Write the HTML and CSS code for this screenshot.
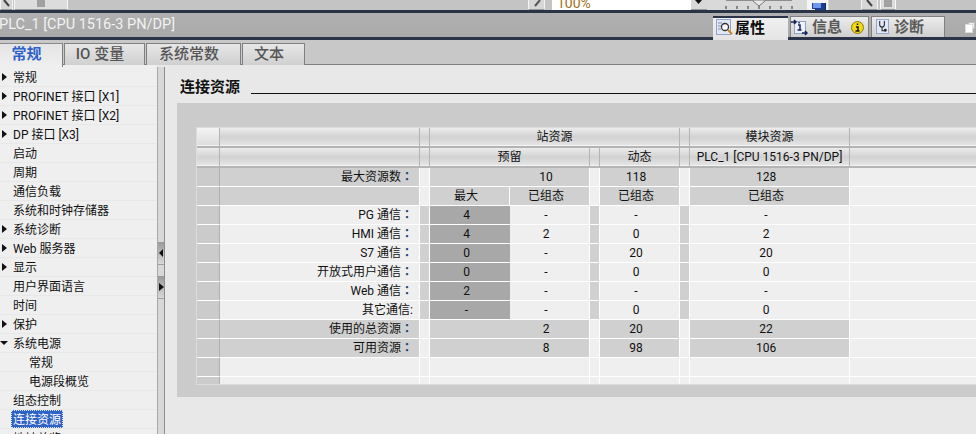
FILE: index.html
```html
<!DOCTYPE html>
<html lang="zh-CN">
<head>
<meta charset="utf-8">
<title>PLC_1 属性</title>
<link rel="stylesheet" href="styles.css">
</head>
<body>
<div class="app">
  <div class="toolbar">
    <span class="tool tool-a"><svg width="10" height="10" viewBox="0 0 10 10"><path d="M2 0l5 6" stroke="#444" stroke-width="2"/></svg></span>
    <span class="thumb thumb-a"><svg width="8" height="10" viewBox="0 0 8 10"><path d="M1 0v7M3 0v7M5 0v7M7 0v7" stroke="#666"/></svg></span>
    <span class="tool tool-b"><svg width="10" height="10" viewBox="0 0 10 10"><path d="M8 0L3 6" stroke="#555" stroke-width="2"/></svg></span>
    <span class="zoom-input">100%</span>
    <span class="zoom-drop"><svg width="8" height="5" viewBox="0 0 8 5"><path d="M0 0h7L3.500 4z" fill="#111"/></svg></span>
    <span class="slider">
      <svg width="82" height="10" viewBox="0 0 82 10"><path d="M1 0h66" stroke="#444"/><path d="M1 6v3M12 6v3M23 6v3M34 5v4M45 6v3M56 6v3M67 6v3" stroke="#333"/><path d="M28 0h12v1l-6 5-6-5z" fill="#e8e8e8" stroke="#777"/></svg>
      <span class="zoom-fit"><svg width="16" height="10" viewBox="0 0 16 10"><rect x="4.500" y="-2.500" width="10" height="11" fill="#1b3f8f" stroke="#12265a"/><rect x="1.500" y="-5.500" width="9" height="11" fill="#6f98ea" stroke="#1b3f8f"/></svg></span>
    </span>
    <span class="tool tool-c"><svg width="10" height="10" viewBox="0 0 10 10"><path d="M2 0l5 6" stroke="#444" stroke-width="2"/></svg></span>
    <span class="thumb thumb-b"><svg width="8" height="10" viewBox="0 0 8 10"><path d="M1 0v7M3 0v7M5 0v7M7 0v7" stroke="#666"/></svg></span>
  </div>

  <header class="titlebar">
    <span class="device">PLC_1 [CPU 1516-3 PN/DP]</span>
    <nav class="inspector-tabs">
      <span class="itab itab-active itab-props">
        <svg class="itab-icon" width="17" height="17" viewBox="0 0 17 17"><rect x=".5" y=".5" width="14" height="15" fill="#dfe6f5" stroke="#8fa3cc"/><path d="M2 4h4M2 7h3M2 10h3" stroke="#7f8fb0"/><circle cx="9" cy="8" r="3.500" fill="#fff" stroke="#333" stroke-width="1.300"/><path d="M12 11l4 4" stroke="#c9861a" stroke-width="2"/></svg>
        属性
      </span>
      <span class="itab itab-info">
        <svg class="itab-icon" width="17" height="17" viewBox="0 0 17 17"><rect x="3.500" y="2.500" width="11" height="12" fill="#eef1fa" stroke="#8fa3cc"/><path d="M0 3h4M3 1l2 2-2 2M11 14h5M14 12l2 2-2 2" fill="none" stroke="#13245a" stroke-width="1.500"/><path d="M8 3v1.500M7 6h2v5M6.500 11h4" fill="none" stroke="#13245a" stroke-width="1.500"/></svg>
        <span class="itab-label">信息</span>
        <svg class="info-badge" width="13" height="13" viewBox="0 0 13 13"><circle cx="6.500" cy="6.500" r="6" fill="#f4d90f" stroke="#8a7a10"/><path d="M6.500 2.500v1.500M5 6h2v3.500M4.500 10h4" fill="none" stroke="#111" stroke-width="1.500"/></svg>
      </span>
      <span class="itab itab-diag">
        <svg class="itab-icon" width="13" height="16" viewBox="0 0 14 17"><rect x=".5" y=".5" width="13" height="15" fill="#e2e8f6" stroke="#8fa3cc"/><path d="M4 2v4a2.500 2.500 0 0 0 5 0V2M6.500 9v3.500h3" fill="none" stroke="#222" stroke-width="1.100"/><circle cx="10" cy="12" r="1.500" fill="#222"/></svg>
        诊断
      </span>
    </nav>
    <span class="win-btn"><svg width="10" height="11" viewBox="0 0 10 11"><rect x="3.500" y=".5" width="6" height="6" fill="#eee" stroke="#bbb"/><rect x=".5" y="2.500" width="7" height="8" fill="#fff" stroke="#ddd"/></svg></span>
  </header>

  <div class="subtabs">
    <span class="subtab subtab-active w-general">常规</span>
    <span class="subtab w-io">IO 变量</span>
    <span class="subtab w-const">系统常数</span>
    <span class="subtab w-text">文本</span>
  </div>

  <main class="body-area">
    <aside class="tree">
      <div class="node arrow">常规</div>
      <div class="node arrow">PROFINET 接口 [X1]</div>
      <div class="node arrow">PROFINET 接口 [X2]</div>
      <div class="node arrow">DP 接口 [X3]</div>
      <div class="node">启动</div>
      <div class="node">周期</div>
      <div class="node">通信负载</div>
      <div class="node">系统和时钟存储器</div>
      <div class="node arrow">系统诊断</div>
      <div class="node arrow">Web 服务器</div>
      <div class="node arrow">显示</div>
      <div class="node">用户界面语言</div>
      <div class="node">时间</div>
      <div class="node arrow">保护</div>
      <div class="node open">系统电源</div>
      <div class="node child">常规</div>
      <div class="node child">电源段概览</div>
      <div class="node">组态控制</div>
      <div class="node"><span class="selected">连接资源</span></div>
      <div class="node">地址总览</div>
    </aside>
    <div class="splitter">
      <span class="grip grip-left"><svg width="5" height="8" viewBox="0 0 5 8"><path d="M4 0v8L0 4z" fill="#111"/></svg></span>
      <span class="grip grip-right"><svg width="5" height="8" viewBox="0 0 5 8"><path d="M0 0v8l5-4z" fill="#111"/></svg></span>
    </div>
    <section class="content">
      <h2 class="section-title"><span>连接资源</span></h2>
      <div class="panel">
        <table class="res">
          <colgroup>
            <col class="c-h"><col class="c-l"><col class="c-g"><col class="c-v"><col class="c-v"><col class="c-g"><col class="c-v"><col class="c-g"><col class="c-m"><col>
          </colgroup>
          <tr class="head">
            <th class="corner"></th><th></th><th></th><th colspan="4">站资源</th><th></th><th>模块资源</th><th class="end"></th>
          </tr>
          <tr class="head">
            <th></th><th></th><th></th><th colspan="2">预留</th><th></th><th>动态</th><th></th><th>PLC_1 [CPU 1516-3 PN/DP]</th><th class="end"></th>
          </tr>
          <tr class="sum">
            <td class="h"></td><td class="l">最大资源数<span class="colon" lang="zh-Hant">：</span></td><td class="g"></td><td class="v" colspan="2"><span class="at-right">10</span></td><td class="g"></td><td class="v">118</td><td class="g"></td><td class="v">128</td><td class="rest"></td>
          </tr>
          <tr class="sum">
            <td class="h"></td><td class="l"></td><td class="g"></td><td class="v">最大</td><td class="v">已组态</td><td class="g"></td><td class="v">已组态</td><td class="g"></td><td class="v">已组态</td><td class="rest"></td>
          </tr>
          <tr>
            <td class="h"></td><td class="l">PG 通信<span class="colon" lang="zh-Hant">：</span></td><td class="g"></td><td class="v dark">4</td><td class="v">-</td><td class="g"></td><td class="v">-</td><td class="g"></td><td class="v">-</td><td class="rest"></td>
          </tr>
          <tr>
            <td class="h"></td><td class="l">HMI 通信<span class="colon" lang="zh-Hant">：</span></td><td class="g"></td><td class="v dark">4</td><td class="v">2</td><td class="g"></td><td class="v">0</td><td class="g"></td><td class="v">2</td><td class="rest"></td>
          </tr>
          <tr>
            <td class="h"></td><td class="l">S7 通信<span class="colon" lang="zh-Hant">：</span></td><td class="g"></td><td class="v dark">0</td><td class="v">-</td><td class="g"></td><td class="v">20</td><td class="g"></td><td class="v">20</td><td class="rest"></td>
          </tr>
          <tr>
            <td class="h"></td><td class="l">开放式用户通信<span class="colon" lang="zh-Hant">：</span></td><td class="g"></td><td class="v dark">0</td><td class="v">-</td><td class="g"></td><td class="v">0</td><td class="g"></td><td class="v">0</td><td class="rest"></td>
          </tr>
          <tr>
            <td class="h"></td><td class="l">Web 通信<span class="colon" lang="zh-Hant">：</span></td><td class="g"></td><td class="v dark">2</td><td class="v">-</td><td class="g"></td><td class="v">-</td><td class="g"></td><td class="v">-</td><td class="rest"></td>
          </tr>
          <tr>
            <td class="h"></td><td class="l">其它通信:</td><td class="g"></td><td class="v dark">-</td><td class="v">-</td><td class="g"></td><td class="v">0</td><td class="g"></td><td class="v">0</td><td class="rest"></td>
          </tr>
          <tr class="sum">
            <td class="h"></td><td class="l">使用的总资源<span class="colon" lang="zh-Hant">：</span></td><td class="g"></td><td class="v" colspan="2"><span class="at-right">2</span></td><td class="g"></td><td class="v">20</td><td class="g"></td><td class="v">22</td><td class="rest"></td>
          </tr>
          <tr class="sum">
            <td class="h"></td><td class="l">可用资源<span class="colon" lang="zh-Hant">：</span></td><td class="g"></td><td class="v" colspan="2"><span class="at-right">8</span></td><td class="g"></td><td class="v">98</td><td class="g"></td><td class="v">106</td><td class="rest"></td>
          </tr>
          <tr class="empty">
            <td class="h"></td><td class="l"></td><td class="g"></td><td class="v" colspan="2"></td><td class="g"></td><td class="v"></td><td class="g"></td><td class="v"></td><td class="rest"></td>
          </tr>
          <tr class="empty tail">
            <td class="h"></td><td class="l"></td><td class="g"></td><td class="v" colspan="2"></td><td class="g"></td><td class="v"></td><td class="g"></td><td class="v"></td><td class="rest"></td>
          </tr>
        </table>
      </div>
    </section>
  </main>
</div>
</body>
</html>
```

FILE: styles.css
```css
* { box-sizing: border-box; }
html, body { margin: 0; padding: 0; }
body {
  width: 976px;
  height: 434px;
  overflow: hidden;
  background: #e8e8e8;
  color: #111;
  font: 12px/18px Roboto, "Noto Sans CJK SC", sans-serif;
}
.app { display: flex; flex-direction: column; height: 434px; overflow: hidden; }

/* top toolbar, cut by the top of the screenshot */
.toolbar {
  flex: none;
  height: 13px;
  display: flex;
  align-items: flex-end;
  overflow: hidden;
  background: #c4c4c4;
  border-bottom: 3px solid #2b3349;
}
.toolbar > span { height: 10px; flex: none; display: flex; align-items: flex-start; justify-content: center; }
.tool { width: 17px; background: #d6d6d6; border: 1px solid #f4f4f4; border-top: 0; border-bottom: 1px solid #999; }
.thumb { background: #dcdcdc; border: 1px solid #f8f8f8; border-top: 0; border-bottom: 1px solid #999; }
.tool-a { width: 13px; }
.thumb-a { width: 54px; margin-left: 1px; }
.tool-b { margin-left: 460px; }
.zoom-input {
  width: 139px;
  margin-left: 7px;
  background: #fff;
  padding-left: 5px;
  color: #a2701c;
  font-size: 14px;
  line-height: 10px;
  justify-content: flex-start !important;
  overflow: hidden;
}
.zoom-input { align-items: flex-end !important; padding-bottom: 2px; }
.zoom-drop { width: 16px; background: #d8d8d8; border-bottom: 1px solid #999; }
.slider { width: 122px; background: #d9d9d9; padding-left: 18px; justify-content: flex-start !important; }
.zoom-fit { display: block; width: 21px; height: 10px; padding-left: 4px; background: #f4f4f4; }
.tool-c { margin-left: 32px; }
.thumb-b { width: 16px; margin-left: 2px; }

/* title bar with inspector tabs */
.titlebar {
  flex: none;
  position: relative;
  z-index: 2;
  height: 27px;
  display: flex;
  align-items: flex-end;
  background: linear-gradient(#b0b0b0, #a9a9a9);
  border-bottom: 3px solid #2b3349;
}
.device { align-self: center; margin-left: -1px; color: #f2f2f2; font-size: 14.5px; line-height: 24px; white-space: nowrap; }
.inspector-tabs { display: flex; gap: 2px; margin-left: auto; margin-right: 31px; height: 21px; align-items: flex-start; }
.win-btn { position: absolute; right: 0; top: 7px; width: 11px; height: 11px; }
.itab {
  height: 21px;
  display: flex;
  align-items: center;
  font-size: 15px;
  font-weight: 700;
  line-height: 20px;
  color: #5a5a5a;
  background: linear-gradient(#ececec, #cfcfcf);
  border: 1px solid #808080;
  border-bottom: 0;
}
.itab-icon { flex: none; }
.itab-active {
  height: 24px;
  margin-bottom: -3px;
  color: #0c0c0c;
  background: linear-gradient(#f0f0f0, #e4e4e4);
  border: 0;
  border-top: 2px solid #2b3349;
  padding-bottom: 3px;
}
.itab-props { width: 75px; padding-left: 3px; }
.itab-props .itab-icon { margin-right: 2px; }
.itab-info { width: 79px; }
.itab-info .itab-icon { margin-right: 4px; }
.itab-diag { width: 74px; padding-left: 4px; }
.itab-diag .itab-icon { margin-right: 5px; }
.itab-label { flex: 1; }
.info-badge { flex: none; margin-right: 4px; }

/* sub tabs */
.subtabs {
  flex: none;
  height: 25px;
  padding-top: 3px;
  display: flex;
  gap: 1px;
  background: #c8c8c8;
  border-bottom: 1px solid #808080;
}
.subtab {
  height: 22px;
  padding-right: 9px;
  text-align: center;
  font-size: 15px;
  font-weight: 500;
  line-height: 20px;
  color: #555;
  background: linear-gradient(#e6e6e6, #d0d0d0);
  border: 1px solid #808080;
  border-bottom: 0;
}
.subtab-active {
  height: 24px;
  color: #2f62c9;
  font-weight: 700;
  border-left: 0;
  border-top-color: #8a8a8a;
  background: linear-gradient(#e4e4e4, #f0f0f0);
  position: relative;
}
.w-general { width: 63px; }
.w-io { width: 81px; }
.w-const { width: 95px; }
.w-text { width: 63px; }

/* main area */
.body-area { flex: 1; min-height: 0; display: flex; }
.tree { flex: none; width: 157px; padding-top: 3px; background: #efefef; overflow: hidden; }
.node {
  position: relative;
  height: 19px;
  padding-left: 13px;
  line-height: 20px;
  white-space: nowrap;
  border-bottom: 1px solid #e8e8e8;
}
.node.arrow::before, .node.open::before {
  content: "";
  position: absolute;
  left: 2px;
  top: 5px;
  border-style: solid;
  border-width: 4px 0 4px 5px;
  border-color: transparent transparent transparent #111;
}
.node.open::before { left: 0; top: 7px; border-width: 4px 4px 0; border-color: #111 transparent transparent; }
.node.child { padding-left: 29px; }
.selected {
  display: block;
  width: max-content;
  height: 18px;
  margin-left: -2px;
  padding: 0 2px;
  color: #fff;
  background: #2f62c9;
  outline: 1px dotted #dfe6f5;
  outline-offset: -1px;
}
.splitter {
  flex: none;
  width: 8px;
  margin-top: 2px;
  padding-top: 175px;
  display: flex;
  flex-direction: column;
  background: #d8d8d8;
  border-left: 1px solid #a8a8a8;
  border-right: 1px solid #8c8c8c;
}
.grip {
  height: 23px;
  display: flex;
  align-items: center;
  justify-content: center;
  background: linear-gradient(#9a9a9a, #d8d8d8);
  border-bottom: 1px solid #a0a0a0;
}
.grip-right { margin-top: 11px; }
.content { flex: 1; min-width: 0; padding: 0 0 0 12px; background: #e8e8e8; }
.section-title {
  margin: 12px 0 0 3px;
  display: flex;
  align-items: center;
  height: 20px;
  font-size: 15px;
  font-weight: 700;
  line-height: 20px;
  color: #111;
}
.section-title span { flex: none; }
.section-title::after { content: ""; flex: 1; height: 1px; margin: 12px 0 0 11px; background: #111; }
.panel {
  margin-top: 6px;
  height: 294px;
  padding: 24px 0 0 19px;
  background: #cbcbcb;
}

/* resource table */
.res {
  width: 780px;
  table-layout: fixed;
  border-collapse: separate;
  border-spacing: 0;
  border-top: 1px solid #dcdcdc;
  border-bottom: 1px solid #dcdcdc;
  border-left: 1px solid #dcdcdc;
  color: #111;
}
.c-h { width: 23px; }
.c-l { width: 200px; }
.c-g { width: 10px; }
.c-v { width: 80px; }
.c-m { width: 160px; }
.res th, .res td { padding: 0; height: 19px; line-height: 17px; font-weight: 400; white-space: nowrap; overflow: hidden; }
.res tr { height: 19px; }
.res td { border-bottom: 1px solid #fff; border-right: 1px solid #fff; background: #efefef; }
.res .head th {
  height: 20px;
  line-height: 17px;
  padding-top: 1px;
  text-align: center;
  background: linear-gradient(#ececec 0, #d2d2d2 50%, #dcdcdc 75%, #e6e6e6 100%);
  border-right: 1px solid #b4b4b4;
  border-bottom: 2px solid #b4b4b4;
  box-shadow: inset 0 -1px 0 #f4f4f4;
}
.res .head tr { height: 20px; }
.res .head th.corner { background: linear-gradient(#f4f4f4, #dcdcdc); }
.res .head th.end { border-right: 0; }
.res .h { background: #cbcbcb; border-right: 1px solid #b0b0b0; }
.res .l { text-align: right; padding-right: 6px; }
.res .g { background: #d0d0d0; }
.res .v { text-align: center; padding-right: 7px; }
.res .v.dark { background: #a8a8a8; border-right: 0; }
.res .rest { background: #efefef; border-right: 0; }
.res .sum .l, .res .sum .v { background: #d0d0d0; }
.res .sum .g { background: #efefef; }
.res .empty .g { background: #efefef; }
.res .tail td { height: 7px; border-bottom: 0; }
.res tr.tail { height: 7px; }
.at-right { display: block; padding-left: 80px; }
.colon { font-family: "Noto Sans CJK TC", sans-serif; color: #1f4a78; font-weight: 700; line-height: 0; }
```
